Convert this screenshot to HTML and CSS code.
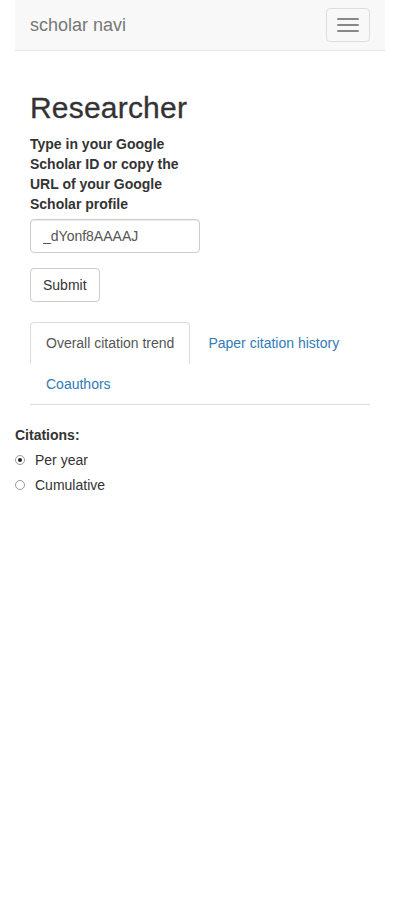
FILE: index.html
```html
<!DOCTYPE html>
<html>
<head>
<meta charset="utf-8">
<link rel="stylesheet" href="styles.css">
</head>
<body>
<div class="page">
  <nav class="navbar">
    <span class="brand">scholar navi</span>
    <button class="toggle"><span class="bar"></span><span class="bar"></span><span class="bar"></span></button>
  </nav>
  <div class="content">
    <h2 class="title">Researcher</h2>
    <div class="form-group">
      <label class="control-label">Type in your Google Scholar ID or copy the URL of your Google Scholar profile</label>
      <input class="form-control" type="text" value="_dYonf8AAAAJ">
    </div>
    <button class="btn">Submit</button>
    <ul class="tabs">
      <li class="tab active"><a>Overall citation trend</a></li>
      <li class="tab"><a>Paper citation history</a></li>
      <li class="tab"><a>Coauthors</a></li>
    </ul>
  </div>
  <div class="radios">
    <div class="radio-label">Citations:</div>
    <div class="radio"><span class="dot checked"></span><span>Per year</span></div>
    <div class="radio second"><span class="dot"></span><span>Cumulative</span></div>
  </div>
</div>
</body>
</html>
```
FILE: styles.css
```css
* { box-sizing: border-box; }
html, body { margin: 0; padding: 0; background: #fff; }
body {
  font-family: "Liberation Sans", Arial, sans-serif;
  font-size: 14px;
  line-height: 20px;
  color: #333;
}
.page { width: 400px; }
.navbar {
  margin: 0 15px;
  height: 51px;
  background: #f8f8f8;
  border-bottom: 1px solid #e7e7e7;
  display: flex;
  justify-content: space-between;
  align-items: flex-start;
}
.brand {
  padding: 15px;
  font-size: 18px;
  line-height: 20px;
  color: #777;
}
.toggle {
  margin: 8px 15px 0 0;
  width: 44px;
  height: 34px;
  padding: 9px 10px;
  background: transparent;
  border: 1px solid #ddd;
  border-radius: 4px;
  display: flex;
  flex-direction: column;
  gap: 4px;
}
.bar {
  display: block;
  width: 22px;
  height: 2px;
  border-radius: 1px;
  background: #888;
}
.content { padding: 21px 30px 0; }
.title {
  margin: 19px 0 10px;
  font-size: 30px;
  line-height: 33px;
  font-weight: 500;
  letter-spacing: 0.2px;
  -webkit-text-stroke: 0.3px #333;
}
.form-group { width: 170px; margin-bottom: 15px; }
.control-label {
  display: block;
  font-weight: bold;
  margin-bottom: 5px;
}
.form-control {
  display: block;
  width: 170px;
  height: 34px;
  padding: 6px 12px;
  font: inherit;
  font-size: 14px;
  color: #555;
  border: 1px solid #ccc;
  border-radius: 4px;
  box-shadow: inset 0 1px 1px rgba(0,0,0,.075);
}
.btn {
  display: block;
  height: 34px;
  padding: 6px 12px;
  font: inherit;
  font-size: 14px;
  color: #333;
  background: #fff;
  border: 1px solid #ccc;
  border-radius: 4px;
}
.tabs {
  list-style: none;
  margin: 20px 0 0;
  padding: 0;
  display: flex;
  flex-wrap: wrap;
  border-bottom: 1px solid #ddd;
}
.tab { margin-bottom: -1px; }
.tab a {
  display: block;
  margin-right: 2px;
  padding: 10px 15px;
  line-height: 20px;
  border: 1px solid transparent;
  border-radius: 4px 4px 0 0;
  color: #337ab7;
}
.tab.active a {
  color: #555;
  background: #fff;
  border-color: #ddd #ddd transparent;
}
.radios { padding: 20px 15px 0; }
.radio-label { font-weight: bold; margin-bottom: 5px; }
.radio {
  display: flex;
  align-items: center;
  gap: 10px;
  height: 20px;
}
.radio.second { margin-top: 5px; }
.dot {
  width: 10px;
  height: 10px;
  border: 1px solid #9a9a9a;
  border-radius: 50%;
  background: #fff;
  position: relative;
}
.dot.checked::after {
  content: "";
  position: absolute;
  left: 2px; top: 2px;
  width: 4px; height: 4px;
  border-radius: 50%;
  background: #222;
}
```
